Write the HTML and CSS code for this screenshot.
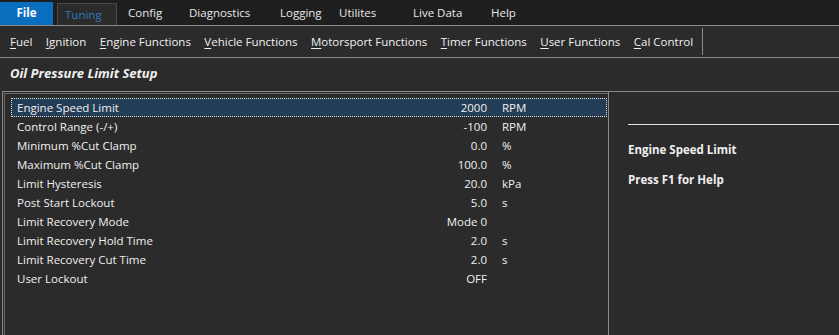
FILE: index.html
```html
<!DOCTYPE html>
<html lang="en">
    <head>
        <meta charset="UTF-8" />
        <title>Oil Pressure Limit Setup</title>
        <link rel="stylesheet" href="styles.css">
    </head>
    <body>
        <div class="tabs">
            <div class="tab tab-file">File</div>
            <div class="tab tab-active">Tuning</div>
            <div class="tab tab-config">Config</div>
            <div class="tab tab-diag">Diagnostics</div>
            <div class="tab tab-logging">Logging</div>
            <div class="tab tab-utils">Utilites</div>
            <div class="tab tab-live">Live Data</div>
            <div class="tab tab-help">Help</div>
        </div>

        <div class="ribbon">
            <div class="ribbon-items">
                <span><u>F</u>uel</span>
                <span><u>I</u>gnition</span>
                <span><u>E</u>ngine Functions</span>
                <span><u>V</u>ehicle Functions</span>
                <span><u>M</u>otorsport Functions</span>
                <span><u>T</u>imer Functions</span>
                <span><u>U</u>ser Functions</span>
                <span><u>C</u>al Control</span>
            </div>
        </div>

        <div class="page-title">Oil Pressure Limit Setup</div>

        <div class="content">
            <div class="params">
                <div class="param-list">
                    <div class="row selected"><span class="name">Engine Speed Limit</span><span class="value">2000</span><span class="unit">RPM</span></div>
                    <div class="row"><span class="name">Control Range (-/+)</span><span class="value">-100</span><span class="unit">RPM</span></div>
                    <div class="row"><span class="name">Minimum %Cut Clamp</span><span class="value">0.0</span><span class="unit">%</span></div>
                    <div class="row"><span class="name">Maximum %Cut Clamp</span><span class="value">100.0</span><span class="unit">%</span></div>
                    <div class="row"><span class="name">Limit Hysteresis</span><span class="value">20.0</span><span class="unit">kPa</span></div>
                    <div class="row"><span class="name">Post Start Lockout</span><span class="value">5.0</span><span class="unit">s</span></div>
                    <div class="row"><span class="name">Limit Recovery Mode</span><span class="value">Mode 0</span><span class="unit"></span></div>
                    <div class="row"><span class="name">Limit Recovery Hold Time</span><span class="value">2.0</span><span class="unit">s</span></div>
                    <div class="row"><span class="name">Limit Recovery Cut Time</span><span class="value">2.0</span><span class="unit">s</span></div>
                    <div class="row"><span class="name">User Lockout</span><span class="value">OFF</span><span class="unit"></span></div>
                </div>
            </div>
            <div class="help">
                <div class="help-rule"></div>
                <div class="help-title">Engine Speed Limit</div>
                <div class="help-text">Press F1 for Help</div>
            </div>
        </div>
    </body>
</html>
```

FILE: styles.css
```css
:root {
    --bar-dark: #1e1e1e;
    --panel: #2b2b2b;
    --line: #8a8a8a;
    --line-dim: #6a6a6a;
    --text: #f0f0f0;
    --accent: #0a6ebf;
    --selected: #243d57;
}

* {
    box-sizing: border-box;
}

body {
    margin: 0;
    width: 839px;
    height: 335px;
    overflow: hidden;
    background-color: var(--panel);
    color: var(--text);
    font-family: 'Open Sans', 'Noto Sans', sans-serif;
    font-size: 11.5px;
}

.tabs {
    display: flex;
    align-items: flex-end;
    height: 26px;
    background-color: var(--bar-dark);
    border-bottom: 1px solid var(--line);
}

.tab {
    height: 23px;
    line-height: 22px;
    padding-left: 11px;
    color: #e8e8e8;
}

.tab-file {
    width: 53px;
    padding: 0;
    text-align: center;
    background-color: var(--accent);
    color: white;
    font-weight: bold;
    margin-right: 4px;
}

.tab-active {
    width: 60px;
    height: 22px;
    padding-left: 7px;
    background-color: var(--panel);
    color: #2f78c0;
    border: 1px solid #4a4a4a;
    border-bottom: none;
}

.tab-config { width: 61px; }
.tab-diag { width: 91px; }
.tab-logging { width: 59px; }
.tab-utils { width: 74px; }
.tab-live { width: 78px; }
.tab-help { width: 50px; }

.ribbon {
    height: 32px;
    background-color: var(--panel);
    border-bottom: 1px solid var(--line);
    display: flex;
    align-items: center;
}

.ribbon-items {
    display: flex;
    align-items: center;
    gap: 13.5px;
    height: 27px;
    padding: 0 9px 0 10px;
    border-right: 1px solid var(--line);
    font-size: 11.5px;
}

.ribbon-items u {
    text-underline-offset: 2px;
}

.page-title {
    height: 33px;
    line-height: 30px;
    padding-left: 10px;
    font-weight: bold;
    font-style: italic;
    font-size: 13px;
}

.content {
    display: flex;
    margin-left: 2px;
    border-top: 1px solid var(--line);
    height: 244px;
}

.params {
    width: 607px;
    border-left: 1px solid var(--line);
    border-right: 1px solid var(--line);
}

.param-list {
    margin: 1px 0 0 1px;
    border-top: 1px solid var(--line-dim);
    border-left: 1px solid var(--line-dim);
    height: 100%;
    padding: 4px 1px 0 6px;
}

.row {
    display: flex;
    align-items: center;
    height: 19px;
    padding-left: 5px;
    border: 1px dotted transparent;
}

.row.selected {
    background-color: var(--selected);
    border-color: #e0e0e0;
}

.name {
    flex: 1;
}

.value {
    width: 120px;
    text-align: right;
}

.unit {
    width: 119px;
    padding-left: 15px;
}

.help {
    flex: 1;
    padding: 32px 0 0 19px;
}

.help-rule {
    border-top: 1px solid #e0e0e0;
    margin-bottom: 16px;
}

.help-title,
.help-text {
    font-weight: bold;
    height: 30px;
    line-height: 17px;
}
```
